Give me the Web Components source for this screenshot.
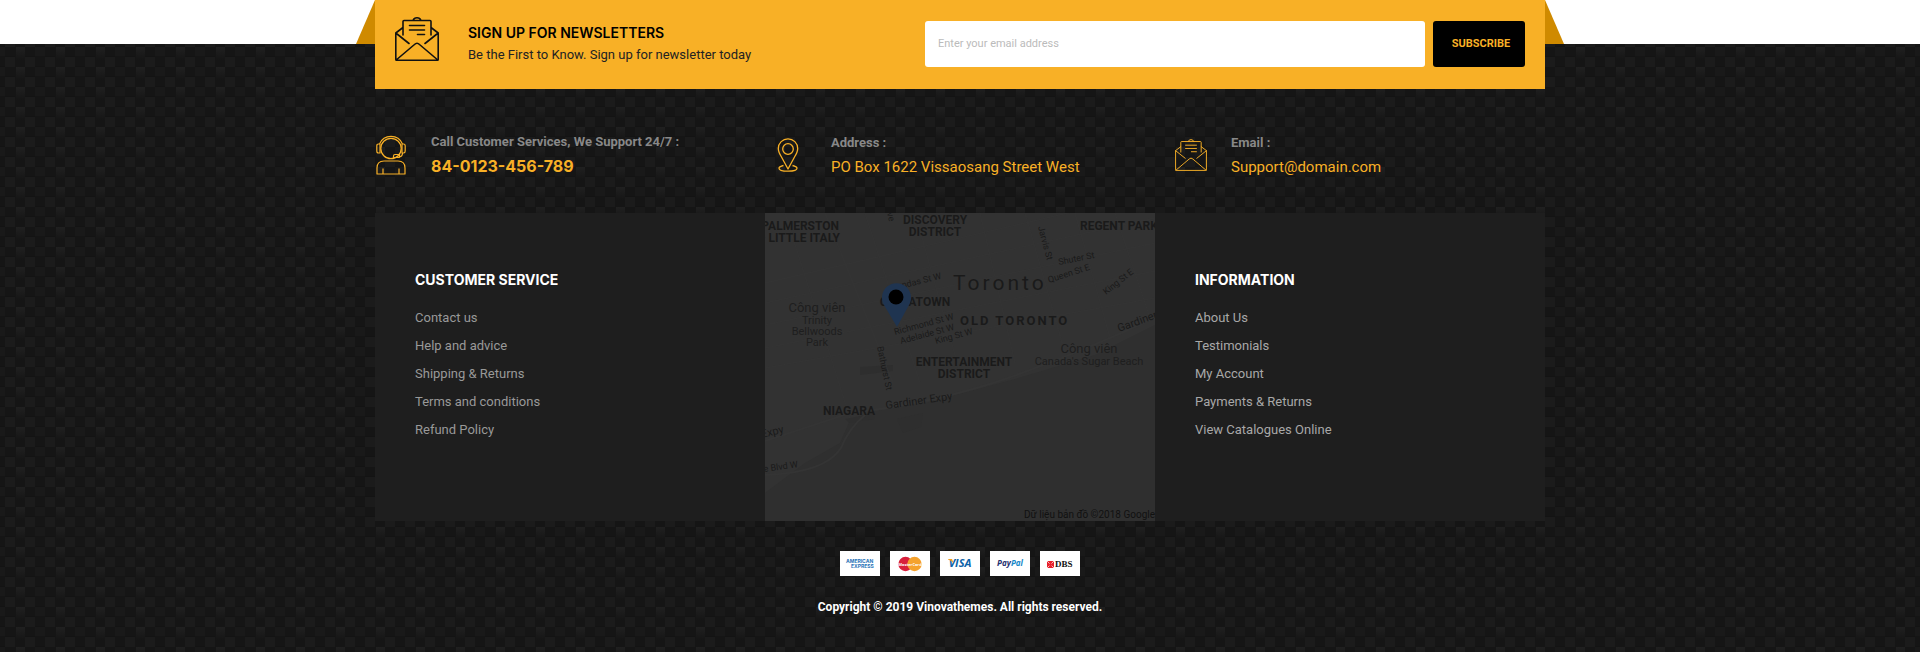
<!DOCTYPE html>
<html lang="en">
<head>
<meta charset="utf-8">
<meta name="viewport" content="width=device-width, initial-scale=1">
<title>Vinovathemes</title>
<style>
body { margin: 0; background: #fff; font-family: Roboto, "Open Sans", sans-serif; font-size: 13px; color: #999; }
</style>
</head>
<body>
<site-footer>
  <news-letter slot="top"></news-letter>
  <contact-item icon="agent"><span slot="label">Call Customer Services, We Support 24/7 :</span><a class="tel" href="tel:840123456789">84-0123-456-789</a></contact-item>
  <contact-item icon="pin"><span slot="label">Address :</span><span>PO Box 1622 Vissaosang Street West</span></contact-item>
  <contact-item icon="mail"><span slot="label">Email :</span><a href="mailto:Support@domain.com">Support@domain.com</a></contact-item>
  <link-list slot="panels" heading="CUSTOMER SERVICE">
    <a href="#contact">Contact us</a>
    <a href="#help">Help and advice</a>
    <a href="#shipping">Shipping &amp; Returns</a>
    <a href="#terms">Terms and conditions</a>
    <a href="#refund">Refund Policy</a>
  </link-list>
  <store-map slot="panels"></store-map>
  <link-list slot="panels" heading="INFORMATION" class="bright">
    <a href="#about">About Us</a>
    <a href="#testimonials">Testimonials</a>
    <a href="#account">My Account</a>
    <a href="#payments">Payments &amp; Returns</a>
    <a href="#catalogues">View Catalogues Online</a>
  </link-list>
  <pay-cards slot="legal"></pay-cards>
  <span slot="legal">Copyright © 2019 Vinovathemes. All rights reserved.</span>
</site-footer>

<script>
const define = (name, html, setup) => {
  const template = document.createElement('template');
  template.innerHTML = html;
  customElements.define(name, class extends HTMLElement {
    constructor() {
      super();
      this.attachShadow({ mode: 'open' }).append(template.content.cloneNode(true));
    }
    connectedCallback() { if (setup) setup(this, this.shadowRoot); }
  });
};

const icons = {
  mail: `<svg viewBox="0 0 44 44" fill="none" stroke="currentColor" stroke-width="var(--stroke, 1.3)" stroke-linejoin="round" stroke-linecap="round">
    <path d="M8 18V4.500Q8 3.500 9 3.500H35Q36 3.500 36 4.500V18M18 3.500Q19 .8 22 .8T26 3.500M8 10.500L.8 16V42.500Q.8 43.200 1.500 43.200H42.500Q43.200 43.200 43.200 42.500V16L36 10.500M.8 16L14 26.500M43.200 16L30 26.500M1.200 43L19.500 27.500Q22 25 24.500 27.500L42.800 43M14.500 8.500H29.500M14.500 13H29.500M22.500 17.500H29.500"/></svg>`,
  agent: `<svg viewBox="0 0 30 40" fill="none" stroke="currentColor" stroke-width="1.200" stroke-linejoin="round">
    <circle cx="15" cy="13.500" r="10.200"/>
    <path d="M3.500 9A12.500 12.500 0 0 1 26.500 9M4 9H2.500Q.8 9 .8 11V16Q.8 18 2.500 18H4ZM26 9H27.500Q29.200 9 29.200 11V16Q29.200 18 27.500 18H26ZM26.500 18Q26.500 22 22.500 22M17.500 22.500V21Q17.500 19.500 19 19.500H23.500V22.500ZM1 39V33Q1 26 8 26H22Q29 26 29 33V39ZM7 39V33.500M23 39V33.500"/></svg>`,
  pin: `<svg viewBox="0 0 26 34" fill="none" stroke="currentColor" stroke-width="1.300" stroke-linejoin="round">
    <path d="M13 31L6.500 19Q3.300 14 3.300 10.500A9.700 9.700 0 0 1 22.700 10.500Q22.700 14 19.500 19Z"/>
    <circle cx="13" cy="11" r="5.300"/>
    <path d="M8.500 27.500Q4 28.500 4 30.200Q4 33.200 13 33.200T22 30.200Q22 28.500 17.500 27.500"/></svg>`
};

/* one 40x20 repeat of the woven background */
const weave = encodeURIComponent(`<svg xmlns="http://www.w3.org/2000/svg" width="40" height="20">
  <linearGradient id="g" x2="0" y2="1"><stop stop-color="#202020"/><stop offset="1" stop-color="#151515"/></linearGradient>
  <rect width="40" height="20" fill="#151515"/>
  <path fill="#1b1b1b" d="M0 10H10V20H0ZM20 10H30V20H20Z"/>
  <path fill="#191919" d="M10 0H20V10H10Z"/>
  <rect x="31" width="9" height="13" fill="url(#g)"/>
  <path stroke="#111" stroke-opacity=".5" d="M0 9.500H30M10 19.500H20"/></svg>`);

define('site-footer', `
<style>
  :host { display: block; }
  footer { min-height: 100vh; box-sizing: border-box; padding-bottom: 32px;
    background: linear-gradient(#fff, #fff) 0 0 / 100% 44px no-repeat,
      url("data:image/svg+xml,${weave}") 25px 7px; }
  .wrap { width: min(1170px, 100% - 36px); margin: 0 auto; }
  .contacts { display: grid; grid-template-columns: repeat(3, 1fr); gap: 30px; padding: 41px 0 34px; }
  .panels { display: grid; grid-template-columns: repeat(3, 1fr); min-height: 308px; background: #1e1e1e; }
  .legal { display: flex; flex-direction: column; align-items: center; gap: 20px; padding-top: 30px;
    font-size: 12px; line-height: 22px; font-weight: 700; color: #fff; text-align: center; }
</style>
<footer><div class="wrap">
  <slot name="top"></slot>
  <div class="contacts"><slot></slot></div>
  <div class="panels"><slot name="panels"></slot></div>
  <div class="legal"><slot name="legal"></slot></div>
</div></footer>`);

define('news-letter', `
<style>
  :host { display: block; position: relative; background: #f8b026; }
  :host::before, :host::after { content: ""; position: absolute; top: 0; width: 19px; height: 44px; background: #cf8a00; }
  :host::before { right: 100%; clip-path: polygon(100% 0, 100% 100%, 0 100%); }
  :host::after { left: 100%; clip-path: polygon(0 0, 100% 100%, 0 100%); }
  section { display: flex; align-items: center; min-height: 89px; padding: 0 20px 2px; box-sizing: border-box; }
  .icon { --stroke: 1.6; flex: none; width: 44px; height: 44px; color: #111; margin: 0 29px 10px 0; }
  svg { display: block; width: 100%; height: 100%; }
  .text { flex: 1; }
  h2 { margin: 0; font: 600 14px/22px Inter, sans-serif; color: #000; }
  p { margin: 0; font-size: 13px; line-height: 22px; color: #222; }
  form { flex: none; display: flex; gap: 8px; width: 600px; }
  input, button { box-sizing: border-box; height: 46px; border: 0; border-radius: 3px; font: 11px Roboto, sans-serif; }
  input { flex: 1; min-width: 0; padding: 0 13px; background: #fff; color: #333; }
  input::placeholder { color: #bbb; opacity: 1; }
  button { width: 92px; padding: 0 0 0 4px; background: #000; color: #f8b026; font-weight: 700; }
  @media (max-width: 1100px) { section { flex-wrap: wrap; gap: 12px; padding: 20px; } form { width: 100%; } }
</style>
<section>
  <div class="icon">${icons.mail}</div>
  <div class="text"><h2>SIGN UP FOR NEWSLETTERS</h2><p>Be the First to Know. Sign up for newsletter today</p></div>
  <form><input type="email" placeholder="Enter your email address" aria-label="Email address"><button type="submit">SUBSCRIBE</button></form>
</section>`);

define('contact-item', `
<style>
  :host { display: flex; align-items: center; gap: 24px; color: #f8b026; font-size: 15px; line-height: 24px; }
  .icon { flex: none; display: flex; width: 32px; }
  svg { display: block; height: 34px; }
  :host([icon="agent"]) svg { height: 40px; margin-left: 1px; }
  :host([icon="mail"]) svg { height: 32px; }
  .label { font-size: 13px; font-weight: 700; color: #888; }
  ::slotted(a) { color: inherit; text-decoration: none; }
  ::slotted(.tel) { font: 700 16px/24px Inter, sans-serif; }
</style>
<div class="icon"></div>
<div><div class="label"><slot name="label"></slot></div><slot></slot></div>`,
(host, root) => { root.querySelector('.icon').innerHTML = icons[host.getAttribute('icon')]; });

define('link-list', `
<style>
  :host { display: block; padding: 56px 40px; color: #999; }
  h3 { margin: 0 0 13px; font: 700 14px/22px Inter, sans-serif; color: #fff; }
  nav { display: grid; }
  ::slotted(a) { justify-self: start; color: inherit; text-decoration: none; font-size: 13px; line-height: 28px; }
  :host(.bright) { color: #a8a8a8; }
</style>
<h3></h3><nav><slot></slot></nav>`,
(host, root) => { root.querySelector('h3').textContent = host.getAttribute('heading'); });

define('store-map', `
<style>
  :host { display: block; background: #303030; overflow: hidden; }
  svg { display: block; width: 100%; height: 308px; font: 9px Roboto, sans-serif; fill: #1a1a1a; }
  .area { font-size: 12px; font-weight: 700; }
  .park { font-size: 11px; fill: #1e1e1e; }
  .park .big { font-size: 13px; }
  .mid { text-anchor: middle; }
  .road { fill: none; stroke: #343434; stroke-width: 2; }
  .minor { fill: none; stroke: #343434; stroke-width: 1; }
  .way { font-size: 11px; }
</style>
<svg viewBox="0 0 390 308" preserveAspectRatio="xMidYMid slice" role="img" aria-label="Map of Toronto">
  <rect width="390" height="308" fill="#323232"/>
  <path fill="#2f2f2f" d="M0 308V280L40 250L75 230L85 207L110 198L160 190L250 166L330 142L390 112V308Z"/>
  <path fill="#2e2e2e" d="M95 154L128 152V158L95 162ZM80 206L110 200V206L84 210ZM132 206L158 200L156 214L138 220Z"/>
  <g class="minor"><path d="M0 70L390 -20M0 90L390 5M0 112L390 30M0 135L390 58M0 155L390 85M20 0L85 205M60 0L128 170M100 0L155 170M150 0L195 160M215 0L250 150M260 0L300 140M310 0L345 125M350 0L385 105"/></g>
  <path class="road" d="M0 228Q40 215 85 200Q170 190 240 166T390 105M0 262Q60 260 76 235Q84 215 100 202"/>
  <g class="area">
    <text x="74" y="17" text-anchor="end">PALMERSTON</text><text x="75" y="29" text-anchor="end">- LITTLE ITALY</text>
    <g class="mid"><text x="170" y="11">DISCOVERY</text><text x="170" y="23">DISTRICT</text><text x="150" y="93">CHINATOWN</text>
    <text x="199" y="153">ENTERTAINMENT</text><text x="199" y="165">DISTRICT</text><text x="84" y="202">NIAGARA</text></g>
    <text x="315" y="17">REGENT PARK</text>
    <text x="195" y="112" font-size="13" letter-spacing="2">OLD TORONTO</text>
  </g>
  <text x="188" y="77" font-size="21" letter-spacing="3">Toronto</text>
  <g class="park mid">
    <text class="big" x="52" y="99">Công viên</text><text x="52" y="111">Trinity</text><text x="52" y="122">Bellwoods</text><text x="52" y="133">Park</text>
    <text class="big" x="324" y="140">Công viên</text><text x="324" y="152">Canada's Sugar Beach</text>
  </g>
  <text transform="translate(273 14) rotate(75)">Jarvis St</text>
  <text transform="translate(122 0) rotate(75)">ve</text>
  <text transform="translate(294 52) rotate(-11)">Shuter St</text>
  <text transform="translate(284 70) rotate(-18)">Queen St E</text>
  <text transform="translate(341 82) rotate(-38)">King St E</text>
  <text transform="translate(127 78) rotate(-14)">Dundas St W</text>
  <text transform="translate(130 122) rotate(-15)">Richmond St W</text>
  <text transform="translate(136 131) rotate(-15)">Adelaide St W</text>
  <text transform="translate(171 131) rotate(-15)">King St W</text>
  <text transform="translate(112 134) rotate(78)">Bathurst St</text>
  <g class="way"><text transform="translate(354 119) rotate(-20)">Gardiner Expy</text>
  <text transform="translate(121 196) rotate(-8)">Gardiner Expy</text>
  <text transform="translate(-3 225) rotate(-14)">Expy</text></g>
  <text transform="translate(-1 259) rotate(-8)">e Blvd W</text>
  <text x="390" y="305" text-anchor="end" font-size="10" fill="#111">Dữ liệu bản đồ ©2018 Google</text>
  <path fill="#1f3450" d="M132 114L119 92A14.500 14.500 0 1 1 144 92Z"/>
  <circle cx="131" cy="84" r="7.500" fill="#000"/>
</svg>`);

define('pay-cards', `
<style>
  :host { display: flex; gap: 10px; }
  svg { display: block; width: 40px; height: 25px; background: #fff; font-family: "Open Sans", sans-serif; font-weight: 700; }
</style>
<svg viewBox="0 0 40 25" role="img" aria-label="American Express" font-size="5" fill="#1f72b8"><text x="6" y="12" font-family="Inter">AMERICAN</text><text x="11" y="17" font-family="Inter">EXPRESS</text></svg>
<svg viewBox="0 0 40 25" role="img" aria-label="MasterCard"><circle cx="15.500" cy="13" r="7.200" fill="#d8203c"/><circle cx="24.500" cy="13" r="7.200" fill="#f5a22d"/><text x="20" y="15" font-size="4" text-anchor="middle" fill="#fff">MasterCard</text></svg>
<svg viewBox="0 0 40 25" role="img" aria-label="Visa"><text x="20" y="16" font-size="11" text-anchor="middle" fill="#0c62a8" font-style="italic">VISA</text><path d="M8 8H12L13.500 12Q11 9 8 8.500Z" fill="#f3a11f"/></svg>
<svg viewBox="0 0 40 25" role="img" aria-label="PayPal"><text x="20" y="15" font-size="8" text-anchor="middle" fill="#26306f" font-style="italic">Pay<tspan fill="#1688c8">Pal</tspan></text></svg>
<svg viewBox="0 0 40 25" role="img" aria-label="DBS"><rect x="7" y="10" width="7" height="7" fill="#e8202b"/><path d="M7 10L14 17M14 10L7 17" stroke="#fff" stroke-width=".7"/><circle cx="10.500" cy="13.500" r="1.500" fill="#e8202b"/><text x="15" y="16" font-size="9" font-family="Liberation Serif" fill="#111">DBS</text></svg>`);
</script>
</body>
</html>
